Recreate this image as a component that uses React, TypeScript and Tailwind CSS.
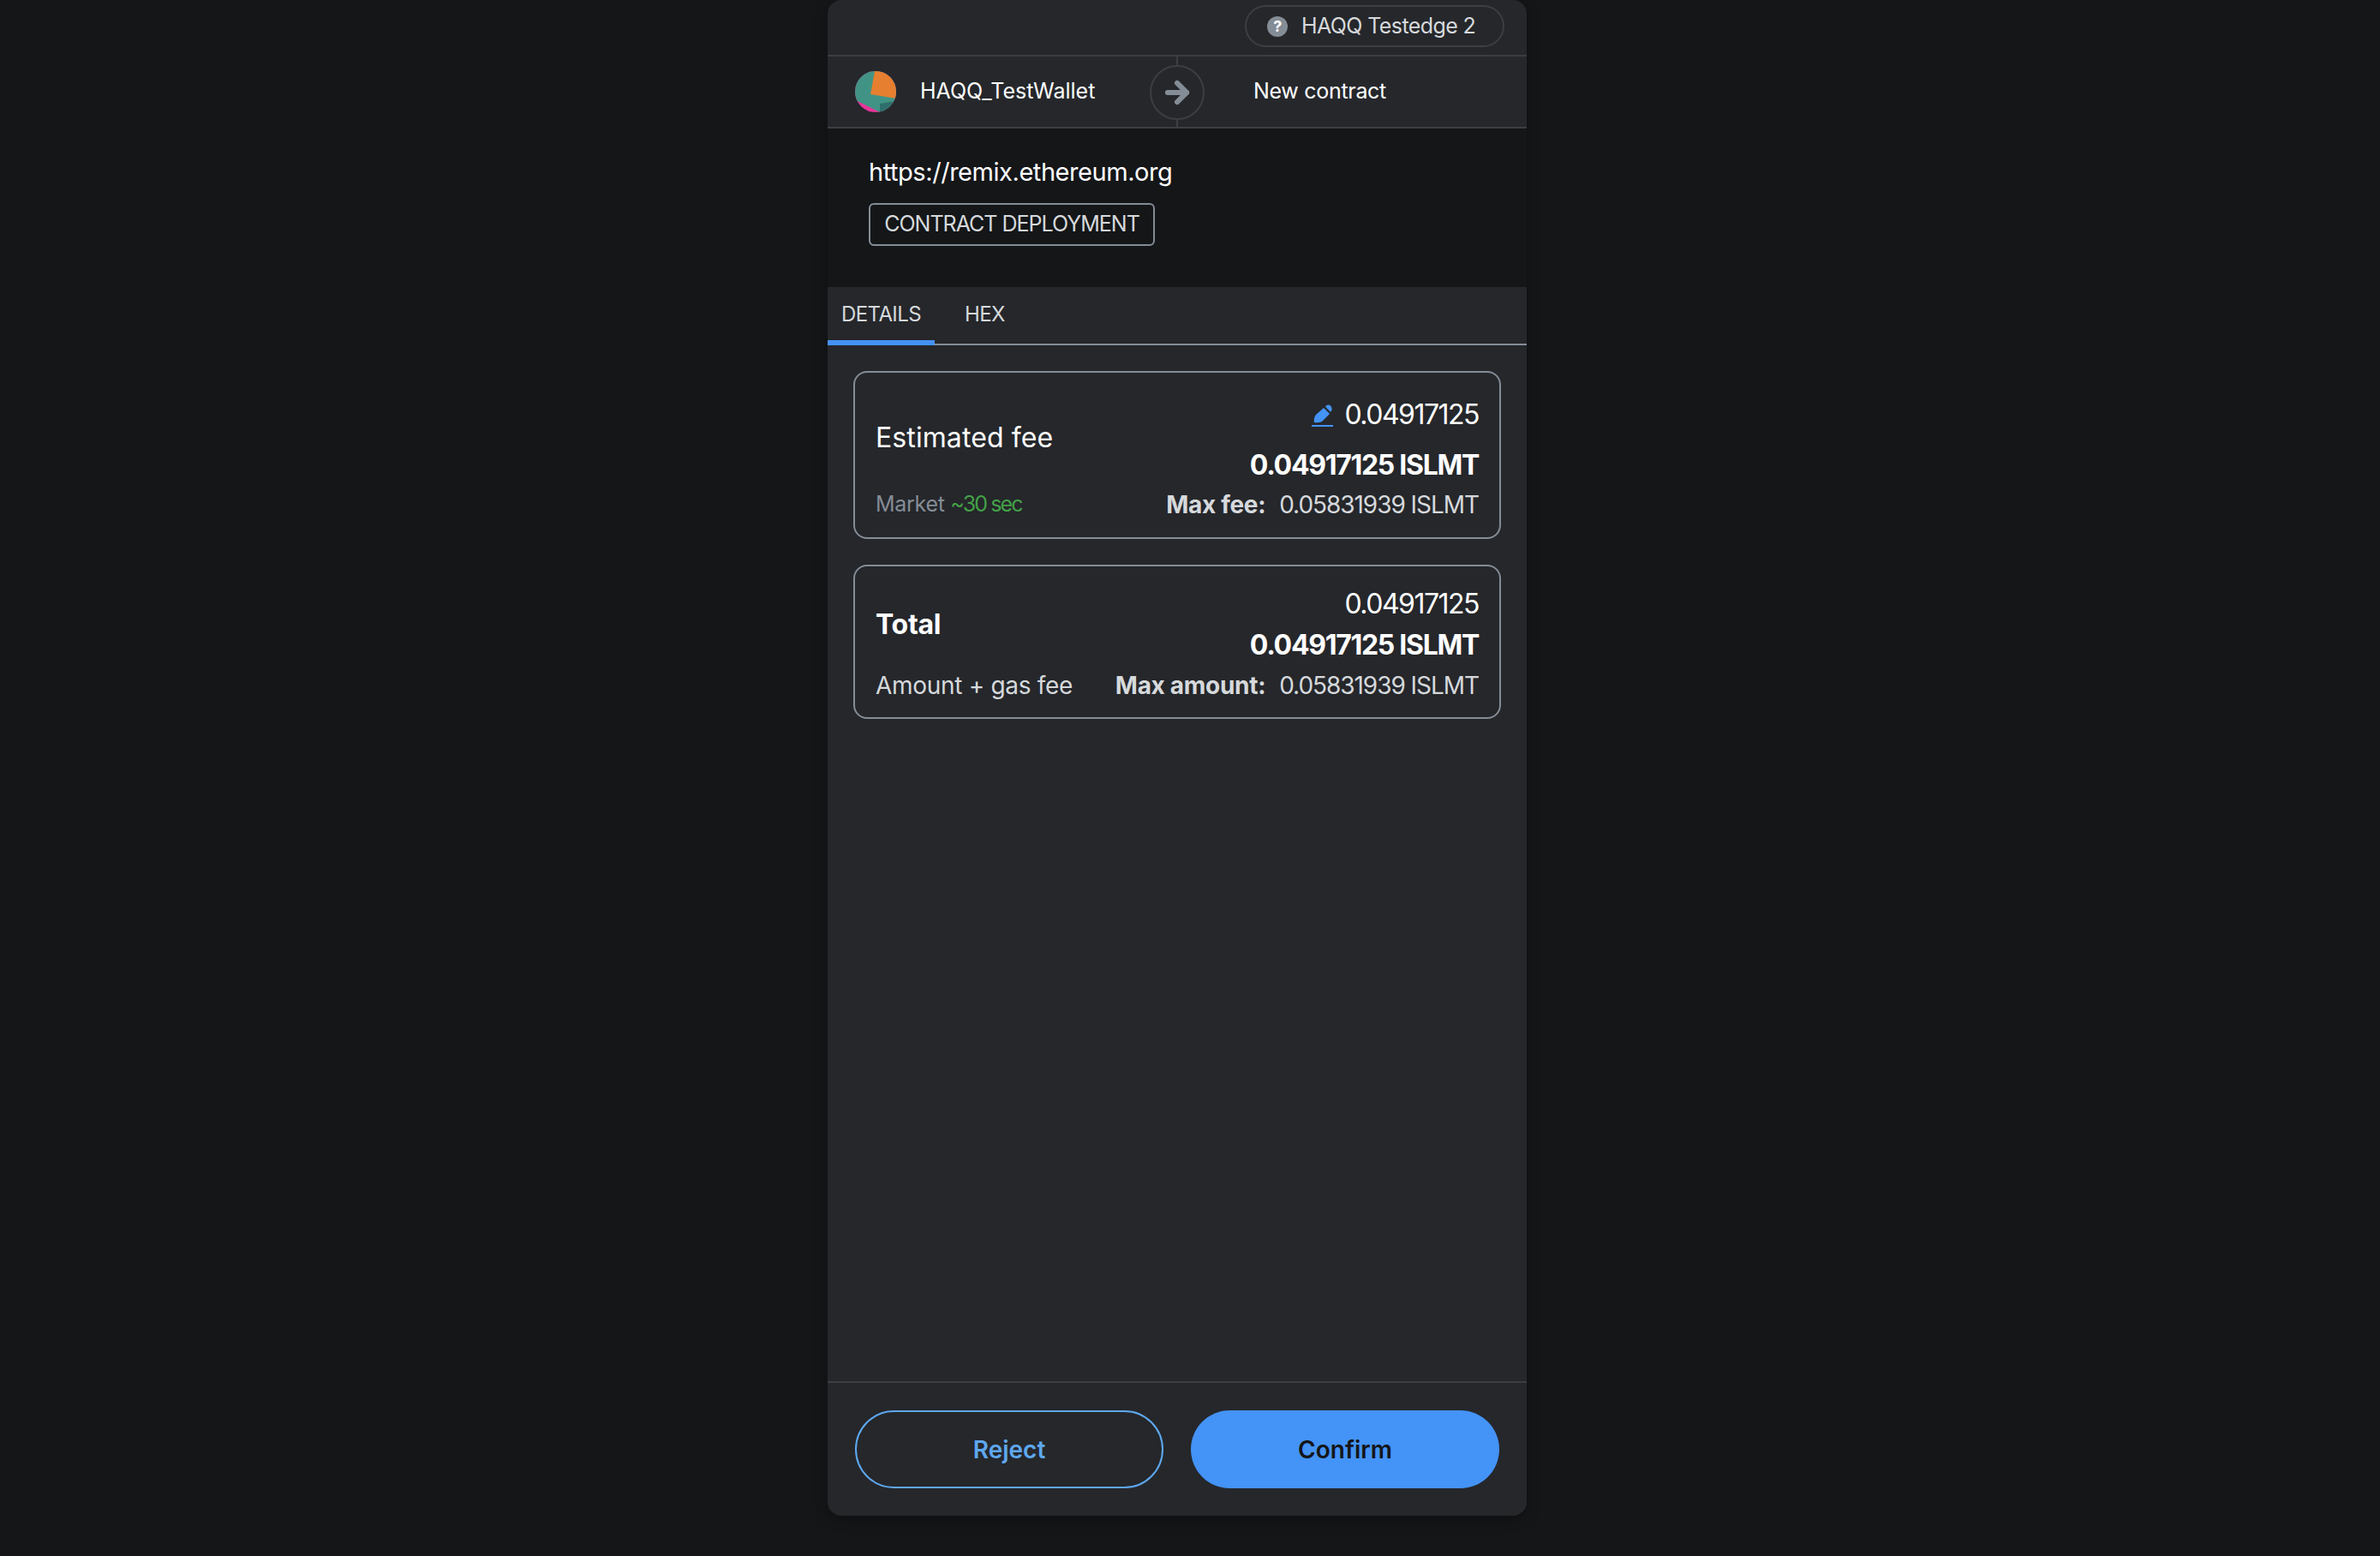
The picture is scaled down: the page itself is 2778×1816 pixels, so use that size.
import { ArrowRight } from "lucide-react";

function Avatar() {
  return (
    <svg viewBox="0 0 48 48" className="h-12 w-12 shrink-0 rounded-full">
      <rect width="48" height="48" fill="#e9359a" />
      <polygon points="4,0 48,0 48,48 29,48 3,35 0,34 0,14" fill="#419485" />
      <polygon points="23,0 48,0 48,32 18,27" fill="#e67f30" />
      <polygon points="29,38 47,35 48,48 29,48" fill="#2f6f6b" />
    </svg>
  );
}

function PencilIcon() {
  return (
    <svg viewBox="0 0 25 27" className="mr-[13px] h-[27px] w-[25px]">
      <path d="M14 5 L21 12 L12 21 Q8 23 3 22 Q2 17 5 13 Z" fill="#4493f6" />
      <path d="M16 3.5 Q19 0 22.500 3 Q25 6.500 22 10 Z" fill="#4493f6" />
      <rect x="0" y="25" width="25" height="2" fill="#4493f6" />
    </svg>
  );
}

function QuestionIcon() {
  return (
    <div className="mr-[16px] flex h-6 w-6 items-center justify-center rounded-full bg-[#848c96] text-[18px] leading-none font-bold text-white">
      ?
    </div>
  );
}

export default function App() {
  return (
    <div className="min-h-[1816px] bg-[#141618] pl-[966px] font-['Inter',sans-serif]">
      <div className="flex h-[1769px] w-[816px] flex-col overflow-hidden rounded-[16px] bg-[#25272b] shadow-[0_4px_16px_rgba(0,0,0,0.3)]">
        <div className="flex h-[64px] shrink-0 items-start justify-end pt-[6px] pr-[26px]">
          <div className="flex h-[49px] w-[303px] items-center rounded-full border-2 border-[#3b3e43] pl-[24px] text-[25px] tracking-[-0.6px] text-[#d6d9dc]">
            <QuestionIcon />
            HAQQ Testedge 2
          </div>
        </div>

        <div className="relative flex h-[86px] shrink-0 items-center border-y-2 border-[#3b3e43] text-[25px] text-white">
          <div className="flex w-[376px] items-center pl-[32px]">
            <Avatar />
            <span className="ml-[28px]">HAQQ_TestWallet</span>
          </div>
          <div className="absolute top-0 bottom-0 left-[407px] w-[2px] bg-[#3b3e43]" />
          <div className="absolute top-[10px] left-[376px] flex h-[64px] w-[64px] items-center justify-center rounded-full border-2 border-[#3b3e43] bg-[#25272b]">
            <ArrowRight size={38} strokeWidth={3.8} className="text-[#848c96]" />
          </div>
          <span className="ml-[121px] tracking-[-0.3px]">New contract</span>
        </div>

        <div className="h-[185px] shrink-0 bg-[#141618] pt-[30px] pl-[48px]">
          <div className="h-[42px] text-[29px] leading-[42px] tracking-[-0.45px] text-white">
            https://remix.ethereum.org
          </div>
          <div className="mt-[15px] flex h-[50px] w-[334px] items-center justify-center rounded-[6px] border-2 border-[#848c96] text-[25px] tracking-[-1px] text-[#d6d9dc]">
            CONTRACT DEPLOYMENT
          </div>
        </div>

        <div className="flex h-[68px] shrink-0 border-b-2 border-[#848c96] text-[24px] tracking-[-0.6px] text-[#d6d9dc]">
          <div className="relative flex w-[125px] items-center justify-center pb-[3px]">
            DETAILS
            <div className="absolute right-0 -bottom-[2px] left-0 h-[6px] bg-[#4493f6]" />
          </div>
          <div className="ml-[35px] flex items-center pb-[3px]">HEX</div>
        </div>

        <div className="flex flex-1 flex-col gap-[30px] px-[30px] pt-[30px] tracking-[-0.3px] text-white">
          <div className="h-[196px] rounded-[16px] border-2 border-[#848c96] px-[24px] pt-[24px]">
            <div className="flex justify-between">
              <div className="self-center pb-[4px] text-[32px] tracking-[0.1px]">Estimated fee</div>
              <div className="flex flex-col items-end">
                <div className="flex h-[50px] items-center text-[32px] tracking-[-1.5px]">
                  <PencilIcon />
                  0.04917125
                </div>
                <div className="mt-[10px] flex h-[48px] items-center text-[32px] font-bold tracking-[-1.3px]">
                  0.04917125 ISLMT
                </div>
              </div>
            </div>
            <div className="flex h-[44px] items-center justify-between">
              <div className="text-[25px] text-[#848c96]">
                Market <span className="tracking-[-1.9px] text-[#43a047]">~30 sec</span>
              </div>
              <div className="text-[28px] tracking-[-1.05px] text-[#d6d9dc]">
                <span className="mr-[16px] font-bold tracking-[-0.3px]">Max fee:</span>
                0.05831939 ISLMT
              </div>
            </div>
          </div>

          <div className="h-[180px] rounded-[16px] border-2 border-[#848c96] px-[24px] pt-[20px]">
            <div className="flex justify-between">
              <div className="self-center text-[32px] font-bold">Total</div>
              <div className="flex flex-col items-end">
                <div className="flex h-[48px] items-center text-[32px] tracking-[-1.5px]">0.04917125</div>
                <div className="flex h-[48px] items-center text-[32px] font-bold tracking-[-1.3px]">
                  0.04917125 ISLMT
                </div>
              </div>
            </div>
            <div className="flex h-[46px] items-center justify-between">
              <div className="text-[28px] text-[#d6d9dc]">Amount + gas fee</div>
              <div className="text-[28px] tracking-[-1.05px] text-[#d6d9dc]">
                <span className="mr-[16px] font-bold tracking-[-0.3px]">Max amount:</span>
                0.05831939 ISLMT
              </div>
            </div>
          </div>
        </div>

        <div className="flex h-[157px] shrink-0 gap-[32px] border-t-2 border-[#3b3e43] px-[32px] pt-[32px]">
          <button className="h-[91px] w-[360px] rounded-full border-2 border-[#5ea8ef] text-[28px] font-semibold text-[#5ea8ef]">
            Reject
          </button>
          <button className="h-[91px] w-[360px] rounded-full bg-[#4493f6] text-[28px] font-semibold text-[#141618]">
            Confirm
          </button>
        </div>
      </div>
    </div>
  );
}
